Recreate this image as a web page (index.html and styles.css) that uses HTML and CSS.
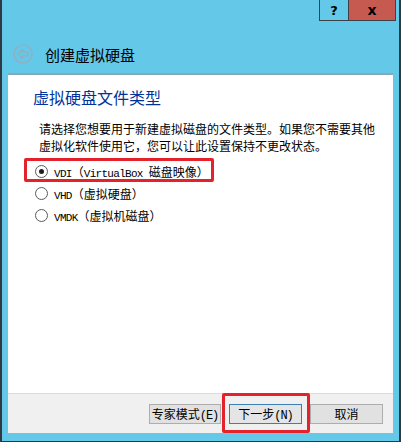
FILE: index.html
```html
<!DOCTYPE html>
<html lang="zh-CN">
  <head>
    <meta charset="UTF-8" />
    <title>创建虚拟硬盘</title>
    <link rel="stylesheet" href="styles.css">
  </head>
  <body>
    <div class="window">
      <div class="titlebar">
        <span class="tb-btn help">?</span>
        <span class="tb-btn close">x</span>
      </div>
      <div class="header">
        <svg class="back" width="20" height="20" viewBox="0 0 20 20">
          <circle cx="10" cy="10" r="9" fill="none" stroke="#8fb0c2" stroke-width="1.5" />
          <path d="M4.5 10 L9.5 5.5 L9.5 8.2 L15 8.2 L15 11.8 L9.5 11.8 L9.5 14.5 Z" fill="none" stroke="#8fb0c2" stroke-width="1.2" stroke-linejoin="round" />
        </svg>
        <span class="title">创建虚拟硬盘</span>
      </div>
      <div class="panel">
        <h2>虚拟硬盘文件类型</h2>
        <p class="desc">请选择您想要用于新建虚拟磁盘的文件类型。如果您不需要其他<br>虚拟化软件使用它，您可以让此设置保持不更改状态。</p>
        <div class="options">
          <label class="option"><span class="radio checked"></span><span class="text"><span class="lat">VDI</span>（<span class="lat">VirtualBox </span>磁盘映像）</span></label>
          <label class="option"><span class="radio"></span><span class="text"><span class="lat">VHD</span>（虚拟硬盘）</span></label>
          <label class="option"><span class="radio"></span><span class="text"><span class="lat">VMDK</span>（虚拟机磁盘）</span></label>
        </div>
      </div>
      <div class="footer">
        <button class="btn expert">专家模式<span class="lat">(E)</span></button>
        <button class="btn default">下一步<span class="lat">(N)</span></button>
        <button class="btn">取消</button>
      </div>
      <div class="mark mark-radio"></div>
      <div class="mark mark-next"></div>
    </div>
  </body>
</html>
```

FILE: styles.css
```css
body {
  margin: 0;
  font-family: "Noto Sans CJK SC", "Liberation Sans", sans-serif;
  background: #64c8e8;
}
.window {
  position: relative;
  width: 401px;
  height: 442px;
  box-sizing: border-box;
  background: #64c8e8;
  border-left: 2px solid #2e3b42;
  border-right: 2px solid #2e3b42;
  border-bottom: 1px solid #2e3b42;
}
.titlebar {
  height: 22px;
  display: flex;
  justify-content: flex-end;
  padding-right: 3px;
}
.tb-btn {
  height: 21px;
  box-sizing: border-box;
  border: 1px solid #3a4247;
  border-top: none;
  display: flex;
  align-items: center;
  justify-content: center;
  font-family: "DejaVu Sans", sans-serif;
  font-weight: bold;
  font-size: 13px;
  color: #000;
}
.help {
  width: 29px;
  border-right: none;
}
.close {
  width: 48px;
  background: #c75a50;
  font-size: 14px;
}
.header {
  height: 38px;
  padding-top: 13px;
  padding-left: 11px;
  display: flex;
  align-items: center;
}
.back {
  margin-right: 12px;
}
.title {
  font-size: 15px;
  color: #000;
}
.panel {
  margin: 0 6px;
  background: #fff;
  border-top: 2px solid #87a8bb;
  padding: 12px 0 0 25px;
  height: 306px;
}
h2 {
  margin: 0;
  font-size: 16px;
  line-height: 20px;
  font-weight: normal;
  color: #003399;
}
.desc {
  margin: 13px 0 0 6px;
  font-size: 12px;
  line-height: 17px;
  color: #000;
}
.options {
  margin-top: 6px;
  margin-left: 2px;
}
.option {
  height: 22px;
  display: flex;
  align-items: center;
  font-size: 12px;
  color: #000;
}
.lat {
  font-family: "Liberation Mono", monospace;
  font-size: 11px;
  letter-spacing: -0.7px;
  white-space: pre;
}
.radio {
  width: 11px;
  height: 11px;
  border: 1px solid #5a5a5a;
  border-radius: 50%;
  background: #fff;
  margin-right: 6px;
  display: flex;
  align-items: center;
  justify-content: center;
}
.radio.checked::after {
  content: "";
  width: 5px;
  height: 5px;
  border-radius: 50%;
  background: #1e1e1e;
}
.footer {
  height: 39px;
  margin: 0 6px;
  background: #f0f0f0;
  border-top: 1px solid #dcdcdc;
  display: flex;
  align-items: center;
  justify-content: flex-end;
  gap: 8px;
  padding-right: 10px;
}
.btn {
  width: 73px;
  height: 20px;
  padding: 0;
  background: #e1e1e1;
  border: 1px solid #adadad;
  font-family: "Noto Sans CJK SC", sans-serif;
  font-size: 12px;
  color: #000;
}
.btn .lat {
  font-size: 12px;
  letter-spacing: -1px;
}
.btn.expert {
  width: 72px;
}
.btn.default {
  border-color: #3c7fb1;
  background: #e5e5e5;
}
.mark {
  position: absolute;
  border: 3px solid #e3222b;
  border-radius: 2px;
  box-sizing: border-box;
}
.mark-radio {
  left: 22px;
  top: 158px;
  width: 190px;
  height: 24px;
}
.mark-next {
  left: 220px;
  top: 393px;
  width: 88px;
  height: 40px;
}
```
